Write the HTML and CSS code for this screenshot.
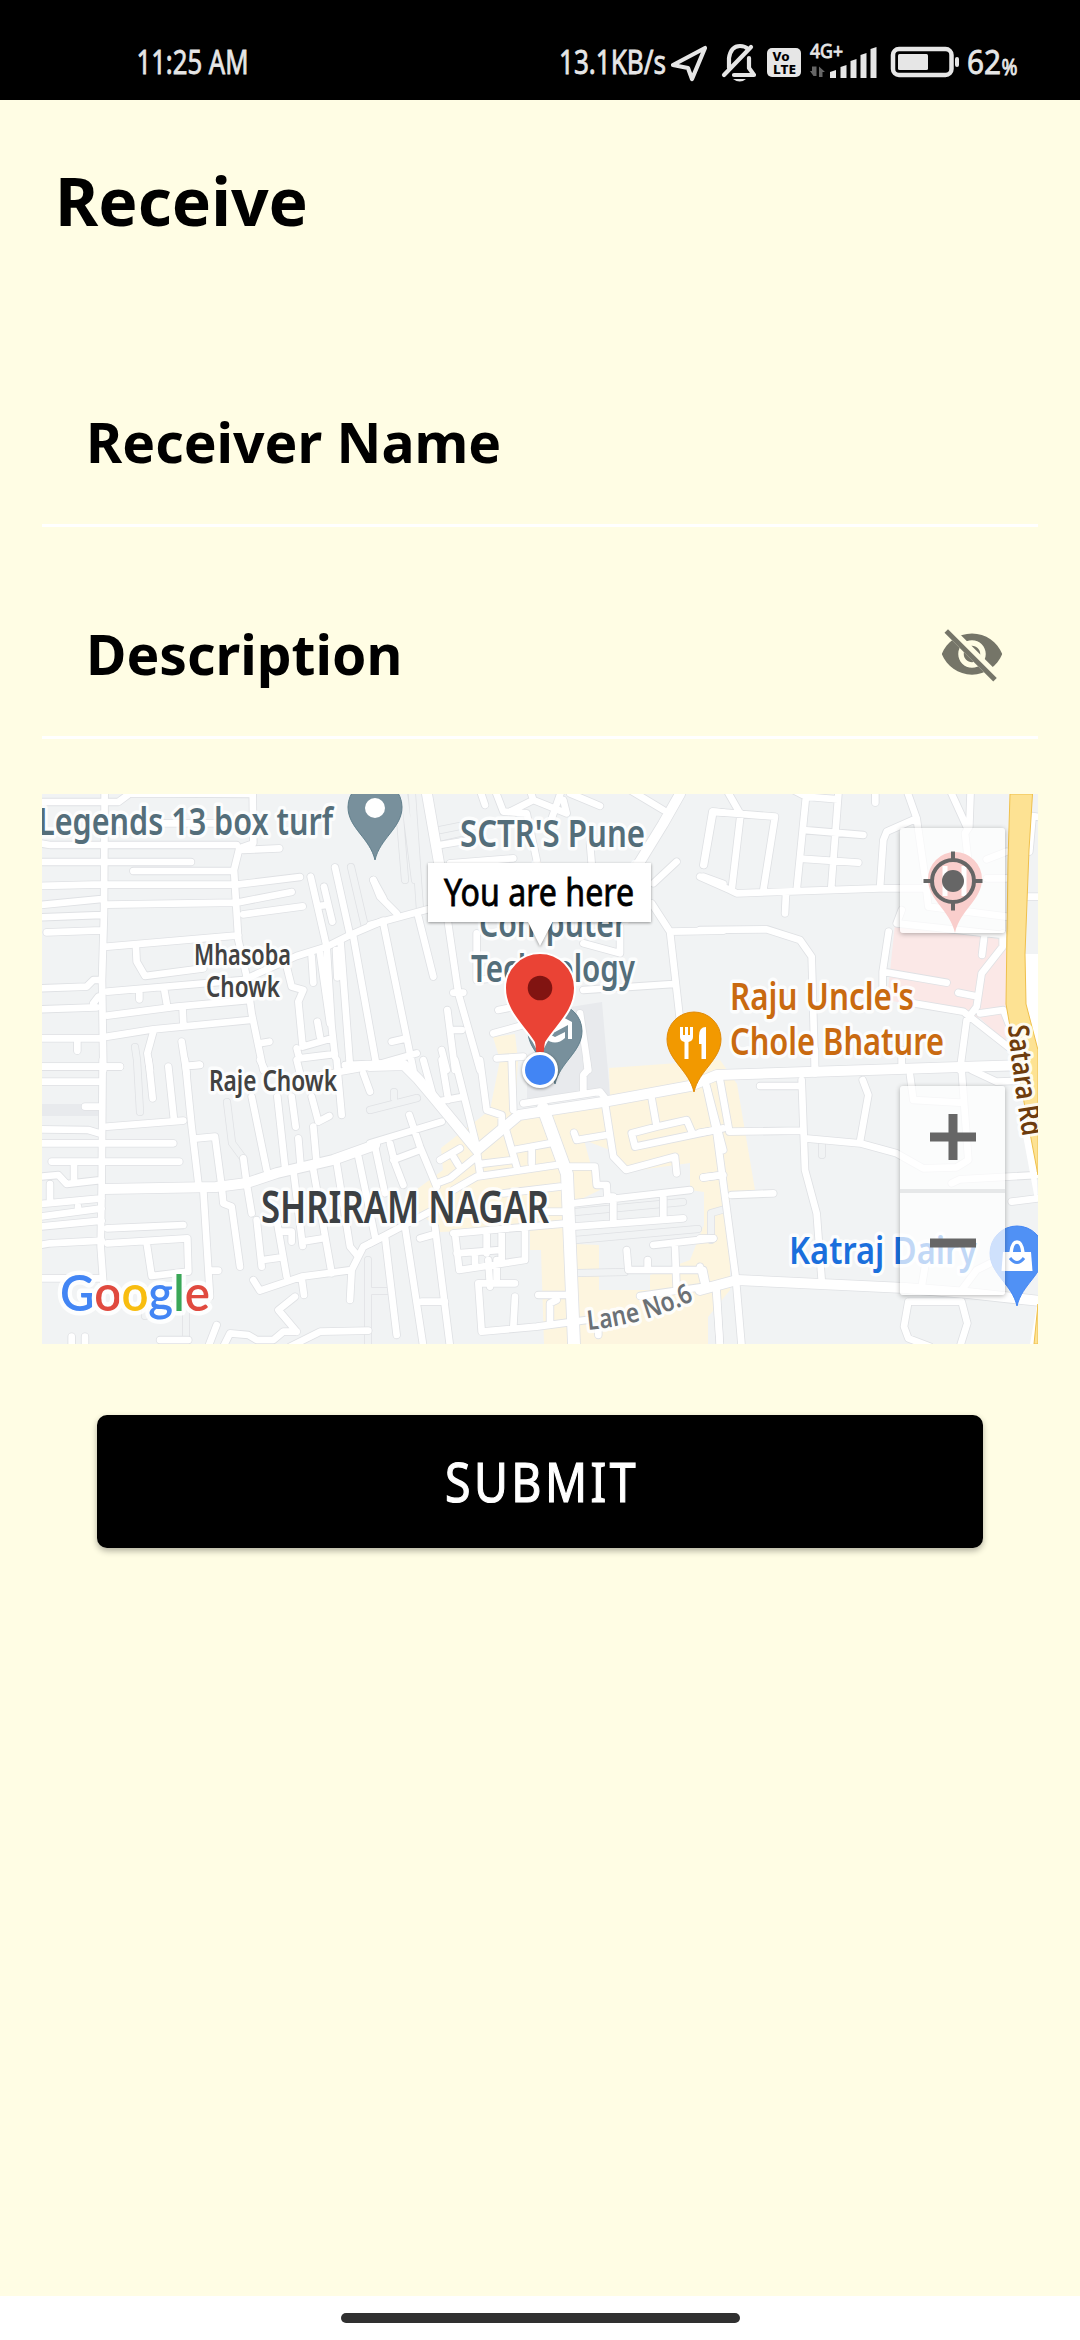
FILE: index.html
```html
<!DOCTYPE html>
<html lang="en">
<head>
<meta charset="utf-8">
<title>Receive</title>
<link rel="stylesheet" href="styles.css">
</head>
<body>
<header class="status">
  <svg class="ink clock" viewBox="134 0 120 100" width="120" height="100"><text x="136.500" y="73.500" font-size="33" textLength="112" lengthAdjust="spacingAndGlyphs">11:25 AM</text></svg>
  <div class="status-icons">
    <svg class="ink" viewBox="556 0 112 100" width="112" height="100"><text x="559" y="73.500" font-size="33" textLength="107" lengthAdjust="spacingAndGlyphs">13.1KB/s</text></svg>
    <svg class="line" viewBox="668 0 46 100" width="46" height="100"><path d="M673 65 L705 48 L692 79 L688 68 Z"/></svg>
    <svg class="line" viewBox="714 0 48 100" width="48" height="100"><path d="M724 75 L751 47 M729 68 V58 Q731 46 740 46 Q745 46 748 49 M734 75 H754 L749 68 V58"/><path class="solid" d="M733 79 H746 Q740 84 733 79Z"/></svg>
    <svg viewBox="762 0 44 100" width="44" height="100"><rect x="767" y="48" width="34" height="29" rx="5" fill="#e6e6e6"/><g fill="#000" font-weight="800" font-size="13"><text x="772.500" y="61" textLength="17" lengthAdjust="spacingAndGlyphs">Vo</text><text x="773" y="74" textLength="23" lengthAdjust="spacingAndGlyphs">LTE</text></g></svg>
    <svg class="ink" viewBox="806 0 78 100" width="78" height="100"><text x="810" y="58" font-size="19" textLength="33" lengthAdjust="spacingAndGlyphs">4G+</text><path class="dim" d="M813.5 76 L810 71 H812 V66.500 H816.500 V76Z M819 77 V66.500 L825 72 H822.500 V77Z"/><path d="M830 72 L836 70 V78 H830Z M840.500 67 L846.500 65 V78 H840.500Z M850.500 61 L856.500 59 V78 H850.500Z M860.500 55 L866.500 53 V78 H860.500Z M870.500 49 L876.500 47 V78 H870.500Z"/></svg>
    <svg viewBox="884 0 80 100" width="80" height="100"><rect x="893" y="49" width="58.500" height="26" rx="6" fill="none" stroke="#e6e6e6" stroke-width="4.500"/><rect x="898" y="54" width="30" height="16" rx="1.500" fill="#e6e6e6"/><rect x="955" y="57" width="4" height="10" rx="2" fill="#e6e6e6"/></svg>
    <svg class="ink" viewBox="964 0 60 100" width="60" height="100"><text x="967" y="73.500" font-size="33" textLength="34" lengthAdjust="spacingAndGlyphs">62</text><text x="1001.500" y="74.500" font-size="21" textLength="16" lengthAdjust="spacingAndGlyphs">%</text></svg>
  </div>
</header>

<main class="screen">
  <h1 class="title">Receive</h1>
  <div class="form">
    <div class="field"><span>Receiver Name</span></div>
    <div class="field"><span>Description</span>
      <svg class="eye" viewBox="0 0 24 24" width="66" height="66"><clipPath id="eyecut"><path d="M2,4.27 L19.73,22 L22.27,19.46 L4.54,1.73 L4.54,1 L23,1 L23,23 L1,23 L1,4.27 Z"/></clipPath><path clip-path="url(#eyecut)" fill-rule="evenodd" d="M12,4.5C7,4.5 2.73,7.61 1,12c1.73,4.39 6,7.5 11,7.5s9.27,-3.11 11,-7.5c-1.73,-4.39 -6,-7.5 -11,-7.5zM12,17c-2.76,0 -5,-2.24 -5,-5s2.24,-5 5,-5 5,2.24 5,5 -2.24,5 -5,5zM12,9c-1.66,0 -3,1.34 -3,3s1.34,3 3,3 3,-1.34 3,-3 -1.34,-3 -3,-3z"/><path d="M2.64,3.63 L20.37,21.37" stroke-width="1.8"/></svg>
    </div>
    <section class="map">
      <svg class="map-canvas" viewBox="42 794 996 550" width="996" height="550">
        <defs>
          <g id="lanes">
            <g transform="translate(30 780) scale(.33333)">
              <path d="M224 30 L222 400 L216 600 L220 870 M30 66 L265 66 L300 40 L665 42 M668 30 L670 190 L628 205 L612 270 L625 480 L650 590 L665 700 L700 870 M230 130 H660 M30 190 L60 195 H620 M640 210 L748 205 M30 246 H483 M310 273 H610 M30 318 L220 313 L620 314 L810 291 M30 375 L215 357 M232 374 L620 368 L785 336 M30 412 L215 405 M640 403 L818 379 M50 457 L215 451 M232 500 L625 466"/>
              <path d="M318 505 L320 545 L345 588 L520 565 M30 625 L170 620 L190 600 H210 M30 688 L200 682 M190 670 L205 650 M232 635 L640 600 L800 528 L890 500 L960 465 L1060 422 M328 640 V658 M402 625 L410 670 M232 707 L440 680 L660 660 M458 690 L460 735 M232 770 L370 748 L660 720 M30 775 H215 M142 775 V812 M370 755 L352 820 L360 870 M455 785 L470 880 M470 858 L510 855 M690 790 L718 785 M30 860 H270"/>
              <path d="M842 290 L890 500 L905 740 M882 320 L907 425 M865 378 L890 375 M915 262 L960 465 M970 470 L1040 860 M932 490 L960 860 M918 510 L922 592 M870 520 L900 730 M845 530 L850 608 M770 560 L785 620 L820 630 L805 665 L818 800 L905 775 M862 725 L870 770 M905 740 L915 830 M800 805 L808 835 L915 822 M945 855 L1060 850 M1030 300 L1060 355"/>
            </g>
            <g transform="translate(370 780) scale(.33333)">
              <path d="M10 300 L30 350 L80 400 M0 435 L240 370 M40 430 L130 870 M145 410 L190 590 M230 400 L265 640 L330 870 M250 638 H280 M232 690 L255 870 M65 785 L110 775 M250 750 H275 M215 810 L230 870 M0 860 L140 820 M330 30 L345 75 M375 30 L400 95 L470 100 L500 240 M420 95 L490 60 L480 30 M490 60 L590 100 L580 60 M600 40 L690 78 M575 30 L540 130 M780 30 L880 90 M1060 98 L1030 95 L1002 255 M1000 290 L1060 312 M850 310 L920 245 M845 370 L900 455 L1060 452 M900 455 L930 720 M210 195 L300 180 M240 250 L430 235 M320 460 V600 L420 590 M640 630 L910 612 M385 690 L460 675 M370 760 L460 735 M380 835 L460 830 M640 490 L750 520 V440 M630 700 L655 870 M660 190 L665 250"/>
            </g>
            <g transform="translate(700 780) scale(.33333)">
              <path d="M0 290 L90 330 L110 340 L540 325 L670 325 M37 95 L225 110 L190 330 M37 95 L10 255 M122 100 L95 330 M80 30 L120 100 M318 50 L290 330 M416 30 L394 320 M280 30 L318 50 L414 58 M310 150 L490 165 M300 236 L475 248 M526 30 V68 M258 340 L255 400 M620 30 L650 115 L560 155 L550 180 L540 325 M650 115 L675 290 L685 380 L920 410 M750 30 L800 140 M812 30 L808 140 L795 160 L810 290 M920 215 L860 238 M860 295 H920 M605 390 L590 430 L910 465 M0 450 L200 448 L300 480 L335 530 L345 880 M566 455 L548 575 V650 M548 575 L740 608 M852 475 L846 525 M908 460 V500 L845 580 L830 680 L800 720 L780 870 M775 638 L825 648 M640 670 L790 695 L930 805 M840 700 L910 690 L930 740 M1020 112 L998 108 L988 215 M978 350 H1020"/>
            </g>
            <g transform="translate(30 1060) scale(.33333)">
              <path d="M218 0 L215 380 L212 560 L220 670 M30 20 H270 M30 65 H210 M165 140 H210 M30 208 L175 210 L215 222 M30 250 H430 M65 305 H215 L448 305 M132 310 V365 M30 350 L85 345 L110 372 L215 360 M60 372 V420 M30 432 L215 415 M30 470 L215 445 M30 500 L215 482 M144 440 V452 M30 555 L60 550 L215 542 M232 505 L460 495 M232 550 L472 535 L475 635 L365 648 L350 550 M232 200 L460 182 M356 0 L368 115 M415 20 L432 180 M465 0 L485 200 L505 370 M470 18 L508 14 M500 235 L555 230 L575 380 L580 430 L605 440 L630 620 M520 390 L540 710 M545 632 H565 M640 295 L650 370 L665 460"/>
              <path d="M665 110 L710 330 M742 110 L765 320 M785 110 L797 200 M805 235 L812 320 M845 110 L865 185 L898 168 M920 0 L935 165 M850 200 L860 310 M1000 40 L1020 95 M860 48 L1060 12 M690 0 L705 30 M800 0 L810 40 M790 330 L818 558 M680 480 L695 620 M740 480 L770 650 M700 600 L755 592 M755 515 H785 V545 M818 545 L880 535 M850 330 L905 640 M920 310 L960 560 L985 590 M985 290 L1035 530 M670 660 L690 692 L815 650 L965 630 L1000 560 L1060 530 M815 655 L822 705 M965 630 L960 720 M795 710 L745 750 L800 815 M580 860 L600 820 L655 825 L680 840 L730 840 L760 815 L800 815 M780 860 L870 815 L1015 812 M535 860 L560 795 M30 655 H215 M125 830 V860 M165 830 V860 M390 840 H475"/>
            </g>
            <g transform="translate(370 1060) scale(.33333)">
              <path d="M160 0 L190 110 M215 0 L235 120 M200 125 L280 110 M255 0 L320 260 M118 165 L150 260 L200 380 M0 250 L215 185 M60 250 L75 310 L100 375 M70 300 L150 270 M15 260 L45 400 M330 0 L350 150 L395 165 V200 M425 0 L430 150 M460 130 L690 95 L710 120 M650 0 L653 30 L640 45 V95 M210 300 L270 265 M200 370 L240 355 L320 290 M250 290 L265 315 M320 270 L330 340 M250 390 L320 350 L560 315 M330 312 L430 300 M405 200 L440 320 M430 270 L540 250 M485 270 V310 M400 400 L570 380 M500 455 H590 M590 320 H675 L680 375 H710 L712 410 H730 V490 M610 430 L960 390 M880 410 V475 M610 500 L940 475 M612 218 L620 240 L710 225 M705 130 L730 290 L768 330 L915 290 L920 340 M845 115 L860 200 L950 180 L965 215 M860 200 L785 220 L795 260 L1060 205 M1010 80 L1060 270 M1000 352 L1060 345"/>
              <path d="M250 520 L590 490 M0 550 L180 455 M105 500 L160 860 M45 530 L80 825 M195 500 L240 860 M150 535 L185 525 M155 725 H225 M255 520 L268 630 L465 600 V510 M350 515 V580 M395 510 V600 M260 580 L390 570 M315 580 V610 M355 600 L360 680 M380 600 V670 M435 670 H325 L335 815 L500 800 L650 780 M435 710 L430 800 M505 705 H590 M560 720 L540 730 V790 M850 555 L1030 535 M915 560 L920 690 M770 570 L775 630 H1000 L1010 680 M833 600 V630 M810 708 L1060 672 M685 800 V825 M1040 690 L1050 860"/>
            </g>
            <g transform="translate(700 1060) scale(.33333)">
              <path d="M345 -30 V25 M605 -30 V25 M15 60 L50 220 L107 650 L125 860 M60 60 L88 215 L305 212 M180 78 H300 M305 60 L315 330 L350 460 L365 660 M315 235 L480 250 L590 280 L670 325 L770 322 L805 300 L785 30 M488 60 L505 105 L480 245 M630 45 L640 120 L780 128 M815 30 L890 65 L960 62 M0 218 L50 210 M10 353 L65 345 M95 405 L220 400 M755 370 L780 358 L1014 345 M935 425 L1014 415 M48 690 L60 860 M665 680 L675 620 M785 690 L830 630 L890 600 M625 725 L612 800 L625 835 L690 860 M630 725 L785 725 L802 790 L780 860 M0 535 H40 M0 620 L15 680"/>
            </g>
          </g>
          <g id="mains">
            <path d="M680 794 L663 824 L636 868 M427 794 L442 880 M370 1066 L404 1065 L418 1079 L434 1098 L477 1150 L519 1115 L551 1110 L603 1102 L690 1086 L717 1075 L960 1067 L1030 1065 M700 1290 L737 1280 L905 1288 L967 1293 L1040 1301 M104 1189 L216 1187 L247 1183 L277 1173 L333 1160 L375 1145"/>
          </g>
          <path id="trunk" d="M543 1108 L567 1174 L574 1344"/>
          <path id="minor" d="M351 867 L365 927 M135 1047 L137 1060 L140 1112 M398 794 L405 880 M412 794 L420 910 M404 794 L415 880 M227 1102 L232 1143 L243 1158 M370 1110 L417 1098 M394 1098 V1092 M575 1212 L683 1202 M575 1240 L698 1229 M578 1273 L625 1272 M368 1260 V1344 M186 1290 V1344 M145 1290 V1316 M822 1143 V1155 M711 1240 V1213 L725 1209 M370 1291 H388 M440 830 L460 826 M440 845 L462 840"/>
          <path id="lane6" d="M588 1330 Q650 1324 700 1297"/>
          <path id="satara" d="M1008 1026 Q1013 1080 1025 1150"/>
        </defs>
        <rect x="42" y="794" width="996" height="550" fill="#f1f3f4"/>
        <g class="block"><path d="M42 1104 H98 V1116 H42Z M570 1007 L602 1002 L610 1095 L527 1103 V1060Z"/></g>
        <g class="beige">
          <path d="M493 1037 L515 1034 L518 1060 L515 1112 L610 1096 L609 1068 L720 1060 L737 1084 L755 1190 L730 1194 V1290 L708 1317 V1344 H544 L541 1250 L530 1250 V1228 L440 1232 L405 1198 L443 1170 L441 1148 L490 1110 L500 1060Z"/>
        </g>
        <path fill="#f1f3f4" d="M584 1140 L610 1150 L625 1172 L690 1163 V1190 L704 1192 V1225 L690 1260 L650 1275 V1290 L599 1290 V1245 L575 1244 V1202 L600 1190 L590 1162Z M450 1240 H528 V1265 L460 1272Z"/>
        <path fill="#fbe8e7" d="M895 924 L1006 940 V1043 L980 1018 L887 1000Z"/>
        <use href="#minor" class="unpaved-edge"/><use href="#minor" class="unpaved"/>
        <use href="#lanes" class="lane-edge"/><use href="#mains" class="main-edge"/><use href="#trunk" class="trunk-edge"/>
        <use href="#lanes" class="lane"/><use href="#mains" class="main"/><use href="#trunk" class="trunk"/>
        <path fill="#fff" d="M1024 954 H1038 V1070 L1024 1010Z M1030 1060 L1038 1200 H1035 L1022 1130Z M1030 1344 L1038 1300V1344Z"/>
        <path class="highway" d="M1010 794 H1032.500 L1029 850 L1025 954 L1026 1004 L1038 1050 V1175 L1016 1060 L1006 1004 L1008 860Z M1038 1304 L1034 1344 H1038Z"/>

        <g class="labels">
          <g fill="#546e7a" font-size="38">
            <text x="38" y="835" textLength="295" lengthAdjust="spacingAndGlyphs">Legends 13 box turf</text>
            <text x="460" y="847" textLength="185" lengthAdjust="spacingAndGlyphs">SCTR'S Pune</text>
            <text x="474" y="892" textLength="166" lengthAdjust="spacingAndGlyphs">Institute of</text>
            <text x="479" y="937" textLength="148" lengthAdjust="spacingAndGlyphs">Computer</text>
            <text x="471" y="982" textLength="164" lengthAdjust="spacingAndGlyphs">Technology</text>
          </g>
          <g fill="#c96a10" font-size="38">
            <text x="730" y="1010" textLength="184" lengthAdjust="spacingAndGlyphs">Raju Uncle's</text>
            <text x="730" y="1055" textLength="214" lengthAdjust="spacingAndGlyphs">Chole Bhature</text>
          </g>
          <g fill="#424242" font-size="28">
            <text x="194" y="965" textLength="97" lengthAdjust="spacingAndGlyphs">Mhasoba</text>
            <text x="206" y="997" textLength="74" lengthAdjust="spacingAndGlyphs">Chowk</text>
            <text x="209" y="1091" textLength="128" lengthAdjust="spacingAndGlyphs">Raje Chowk</text>
          </g>
          <text x="261" y="1222.500" font-size="45" fill="#3c4043" textLength="288" lengthAdjust="spacingAndGlyphs">SHRIRAM NAGAR</text>
          <text x="789" y="1264" font-size="38" fill="#1a6fdc" textLength="188" lengthAdjust="spacingAndGlyphs">Katraj Dairy</text>
          <text font-size="27" fill="#6b7176"><textPath href="#lane6" textLength="111" lengthAdjust="spacingAndGlyphs">Lane No.6</textPath></text>
          <text font-size="29" fill="#6d3c0d"><textPath href="#satara" textLength="112" lengthAdjust="spacingAndGlyphs">Satara Rd</textPath></text>
          <text class="logo" x="60" y="1311" font-size="50" textLength="150" lengthAdjust="spacingAndGlyphs"><tspan fill="#4285f4">G</tspan><tspan fill="#e04a3f">o</tspan><tspan fill="#f8bd10">o</tspan><tspan fill="#4285f4">g</tspan><tspan fill="#3aa757">l</tspan><tspan fill="#e04a3f">e</tspan></text>
        </g>

        <g transform="translate(375 808)"><path fill="#78909c" stroke="#607f8c" d="M0 52 C-5 30 -27 20 -27 -1 A27 27 0 0 1 27 -1 C27 20 5 30 0 52Z"/><circle r="10" fill="#fff"/></g>
        <g transform="translate(555 1032)"><path fill="#78909c" stroke="#607f8c" d="M0 52 C-5 30 -27 20 -27 -1 A27 27 0 0 1 27 -1 C27 20 5 30 0 52Z"/><path fill="#fff" d="M-17 -10 L0 -19 L17 -10 V7 H13 V-7 L0 0Z M-10 0 L0 5 L10 0 V6 Q0 15 -10 6Z"/></g>
        <g transform="translate(694 1040)"><path fill="#f29900" stroke="#e08a08" d="M0 52 C-5 30 -27 20 -27 -1 A27 27 0 0 1 27 -1 C27 20 5 30 0 52Z"/><path fill="#fff" d="M-14 -13 h3 v8 h2 v-8 h3 v8 h2 v-8 h3 v10 q0 4 -4.500 5 v17 h-4 v-17 q-4.500 -1 -4.500 -5Z M5 4 V-4 Q5 -13 12 -13 V19 H7.500 V4Z"/></g>
        <g transform="translate(1017 1254)"><path fill="#5091f5" stroke="#4285f4" d="M0 52 C-5 30 -27 20 -27 -1 A27 27 0 0 1 27 -1 C27 20 5 30 0 52Z"/><path fill="#fff" d="M-14 -2 H14 L15.500 17 H-15.500Z"/><path d="M-6 -1 Q-5 -12 0 -12 Q5 -12 6 -1" fill="none" stroke="#fff" stroke-width="3.500"/><path d="M-7 4 Q0 13 7 4" fill="none" stroke="#5091f5" stroke-width="3"/></g>
        <g transform="translate(955 880)"><path fill="#ea4b42" d="M0 53 C-5 30 -27 20 -27 -1 A27 27 0 0 1 27 -1 C27 20 5 30 0 53Z"/><path stroke="#fff" stroke-width="5" d="M-10 -14 V16 M9 -14 V16"/></g>

        <path fill="#ea4335" stroke="#fff" stroke-width="2" d="M540 1057 C535 1032 505 1018 505 988 A35 35 0 0 1 575 988 C575 1018 545 1032 540 1057Z"/>
        <path fill="#ea4335" d="M535 1040 H545 L543 1060 H537Z"/>
        <circle cx="540" cy="988" r="12.300" fill="#811411"/>
        <circle class="dot" cx="540" cy="1070" r="16.500" fill="#4285f4" stroke="#fff" stroke-width="3"/>
        <path class="bubble" d="M428 863 H651 V922 H552.500 L540 946 L528 922 H428Z"/>
        <text class="bubble-text" x="444" y="905.500" font-size="38" textLength="190" lengthAdjust="spacingAndGlyphs">You are here</text>
      </svg>
      <div class="control locate"><svg viewBox="-30 -30 60 60" width="60" height="60"><circle r="21" fill="none" stroke="#666" stroke-width="4"/><circle r="11" fill="#666"/><path stroke="#666" stroke-width="4" d="M0 -29.500 V-20 M0 20 V29.500 M-29.500 0 H-20 M20 0 H29.500"/></svg></div>
      <div class="control zoom">
        <div class="half"><svg viewBox="-23 -23 46 46" width="46" height="46"><path stroke="#666" stroke-width="9" d="M-23 0 H23 M0 -23 V23"/></svg></div>
        <div class="half"><svg viewBox="-23 -23 46 46" width="46" height="46"><path stroke="#666" stroke-width="9" d="M-23 -1 H23"/></svg></div>
      </div>
    </section>
    <button class="submit"><svg viewBox="0 0 200 60" width="200" height="60"><text x="5" y="51" font-size="54" textLength="194" lengthAdjust="spacingAndGlyphs" letter-spacing="4">SUBMIT</text></svg></button>
  </div>
</main>
<footer class="nav"><div class="pill"></div></footer>
</body>
</html>
```

FILE: styles.css
```css
* { box-sizing: border-box; }
body {
  margin: 0; width: 1080px; height: 2340px;
  display: flex; flex-direction: column;
  background: #fffde4; color: #000;
  font-family: "Noto Sans", sans-serif;
}
svg { display: block; flex: none; overflow: visible; }
.status { height: 100px; background: #000; display: flex; justify-content: space-between; padding: 0 56px 0 134px; }
.status-icons { display: flex; }
.ink { fill: #e6e6e6; }
.ink text { stroke: #e6e6e6; stroke-width: .8px; }
.dim { fill: #666; }
.line { fill: none; stroke: #e6e6e6; stroke-width: 4.2; stroke-linejoin: round; stroke-linecap: round; }
.line .solid { fill: #e6e6e6; stroke: none; }
.screen { flex: 1; }
.title { margin: 0; padding: 55px 0 0 55px; font-size: 66px; line-height: 90px; font-weight: 700; }
.form { margin: 159px 42px 0; display: flex; flex-direction: column; }
.field {
  height: 123px; margin-bottom: 89px; padding: 0 33px 45px 44px;
  border-bottom: 3px solid #fff;
  display: flex; justify-content: space-between;
  font-size: 55.2px; line-height: 75px; font-weight: 700;
}
.field + .field { margin-bottom: 55px; }
.eye { margin-top: 5px; fill: #757568; stroke: none; }
.eye path:last-child { stroke: #757568; }
.map { position: relative; height: 550px; overflow: hidden; }
.lane, .lane-edge, .main, .main-edge, .trunk, .trunk-edge, .unpaved, .unpaved-edge { fill: none; stroke-linecap: round; stroke-linejoin: round; }
.lane { stroke: #fff; stroke-width: 20; }
.lane-edge { stroke: #dfe1e4; stroke-width: 25; }
.main { stroke: #fff; stroke-width: 10; }
.main-edge { stroke: #dfe1e4; stroke-width: 11.6; }
.trunk { stroke: #fff; stroke-width: 12; }
.trunk-edge { stroke: #dfe1e4; stroke-width: 13.6; }
.unpaved { stroke: #f1f3f4; stroke-width: 6.5; }
.unpaved-edge { stroke: #dfe1e4; stroke-width: 8; }
.block { fill: #e8eaed; }
.beige { fill: #fdf5df; }
.highway { fill: #fde293; stroke: #efc04c; stroke-width: 1; }
.labels text { stroke: #fff; stroke-opacity: .85; stroke-width: 7px; stroke-linejoin: round; paint-order: stroke; font-weight: 600; }
.labels text.logo { font-family: Lato, sans-serif; font-weight: 600; stroke-width: 9px; }
.dot, .bubble { filter: drop-shadow(0 1px 1.5px rgba(0, 0, 0, .4)); }
.bubble { fill: #fff; }
.bubble-text { fill: #000; stroke: #000; stroke-width: .8px; }
.control {
  position: absolute; left: 858px; width: 105px;
  background: rgba(255, 255, 255, .73); border-radius: 3px;
  box-shadow: 0 1px 5px rgba(0, 0, 0, .3);
}
.locate { top: 34px; height: 105px; display: flex; align-items: center; justify-content: center; }
.zoom { top: 292px; height: 209px; display: flex; flex-direction: column; }
.half { flex: 1; display: flex; align-items: center; justify-content: center; }
.half + .half { border-top: 4px solid #e6e8e9; }
.submit {
  margin: 71px 55px 0; height: 133px; padding: 0 0 2px;
  display: flex; align-items: center; justify-content: center;
  border: 0; border-radius: 10px; background: #000; font-family: inherit;
  box-shadow: 0 3px 6px rgba(0, 0, 0, .3);
}
.submit text { fill: #fff; stroke: #fff; stroke-width: 1.2px; }
.nav { height: 44px; background: #fff; display: flex; justify-content: center; padding-top: 17px; }
.pill { width: 399px; height: 10px; border-radius: 5px; background: #303030; }
```
